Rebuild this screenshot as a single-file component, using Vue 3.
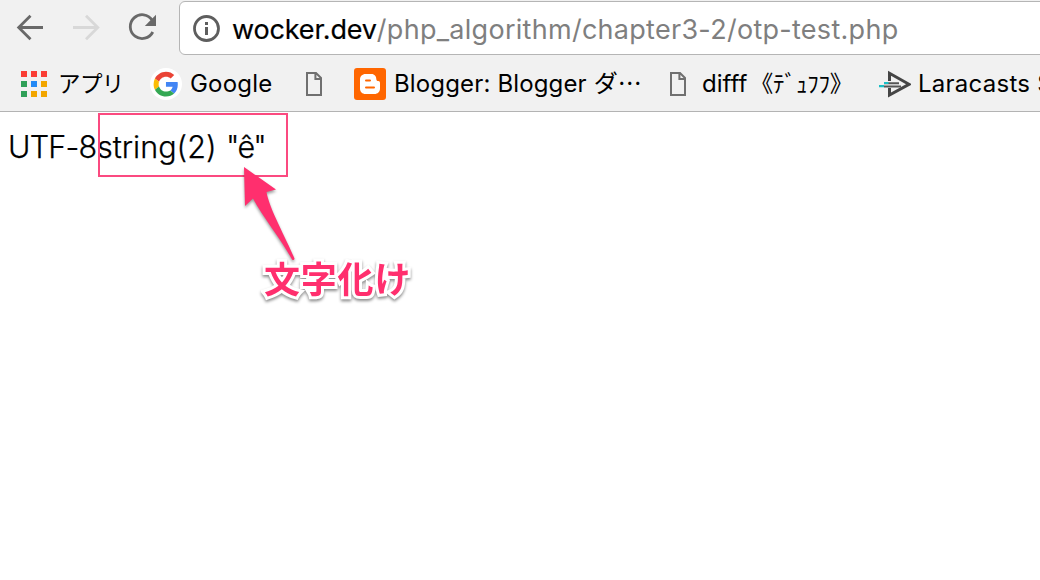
<script setup>
const dots = ['#fa3e35', '#fa3e35', '#fa3e35', '#30a058', '#2489f5', '#f2a600', '#30a058', '#f2a600', '#f2a600']
</script>

<template>
  <div class="window">
    <header class="chrome">
      <div class="toolbar">
        <svg class="nav" width="179" height="56" viewBox="0 0 179 56" fill="none" stroke-width="2.8">
          <path d="M43 27.5H19M30.5 15.7L18.7 27.5L30.5 39.3" stroke="#696969" />
          <path d="M73 27.5H97M86 15.7L97.8 27.5L86 39.3" stroke="#d8d8d8" />
          <path d="M152.2 20.2A11.9 11.9 0 1 0 152.8 32" stroke="#696969" />
          <path d="M156 14.8V26H144.8Z" fill="#696969" />
        </svg>
        <div class="omnibox">
          <svg class="info" width="28" height="28" viewBox="0 0 28 28">
            <circle cx="14.5" cy="14.5" r="12" fill="none" stroke="#5e5e5e" stroke-width="2.8" />
            <path d="M13 8h3v3h-3zM13 13h3v8h-3z" fill="#5e5e5e" />
          </svg>
          <span class="url"><span class="host">wocker.dev</span><span class="path">/php_algorithm/chapter3-2/otp-test.php</span></span>
        </div>
      </div>
      <nav class="bookmarks">
        <div class="item apps">
          <span class="grid"><i v-for="(c, i) in dots" :key="i" :style="{ background: c }"></i></span>
          <span class="label kana">アプリ</span>
        </div>
        <div class="item google">
          <svg width="32" height="32" viewBox="0 0 32 32">
            <circle cx="16" cy="16" r="16" fill="#fff" />
            <g transform="translate(3.6 3.8) scale(.515)">
              <path fill="#EA4335" d="M24 9.5c3.54 0 6.71 1.22 9.21 3.6l6.85-6.85C35.9 2.38 30.47 0 24 0 14.62 0 6.51 5.38 2.56 13.22l7.98 6.19C12.43 13.72 17.74 9.5 24 9.5z" />
              <path fill="#4285F4" d="M46.98 24.55c0-1.57-.15-3.09-.38-4.55H24v9.02h12.94c-.58 2.96-2.26 5.48-4.78 7.18l7.73 6c4.51-4.18 7.09-10.36 7.09-17.65z" />
              <path fill="#FBBC05" d="M10.53 28.59c-.48-1.45-.76-2.99-.76-4.59s.27-3.14.76-4.59l-7.98-6.19C.92 16.46 0 20.12 0 24c0 3.88.92 7.54 2.56 10.78l7.97-6.19z" />
              <path fill="#34A853" d="M24 48c6.48 0 11.93-2.13 15.89-5.81l-7.73-6c-2.15 1.45-4.92 2.3-8.16 2.3-6.26 0-11.57-4.22-13.47-9.91l-7.98 6.19C6.51 42.62 14.62 48 24 48z" />
            </g>
          </svg>
          <span class="label">Google</span>
        </div>
        <div class="item blank">
          <svg width="16" height="24" viewBox="0 0 16 24" fill="none" stroke="#707070" stroke-width="2">
            <path d="M1 1H10L15 6V23H1ZM9.4 1V7H15" />
          </svg>
        </div>
        <div class="item blogger">
          <svg width="32" height="32" viewBox="0 0 32 32">
            <rect width="32" height="32" rx="3" fill="#f60" />
            <path fill="#fff" d="M11.5 6H17.5C20.5 6 22.3 8.4 22.3 11C22.4 12.6 22.9 13 24.3 13C25.5 13 26 13.7 26 15V20.5C26 23.8 23.6 26 20.5 26H11.5C8.3 26 6 23.8 6 20.5V11.5C6 8.3 8.3 6 11.5 6Z" />
            <path d="M12 12.4H16M12 19.6H20" stroke="#f60" stroke-width="2" stroke-linecap="round" />
          </svg>
          <span class="label">Blogger: Blogger ダ⋯</span>
        </div>
        <div class="item difff">
          <svg width="16" height="24" viewBox="0 0 16 24" fill="none" stroke="#707070" stroke-width="2">
            <path d="M1 1H10L15 6V23H1ZM9.4 1V7H15" />
          </svg>
          <span class="label">difff</span><span class="label half">《ﾃﾞｭﾌﾌ》</span>
        </div>
        <div class="item lara">
          <svg width="32" height="28" viewBox="0 0 32 28" fill="none">
            <path d="M10.5 11V3.3L30 14.3L10.5 25V18" stroke="#454545" stroke-width="3" />
            <path d="M5 13.3H20M5 16.4H22" stroke="#555" stroke-width="2" />
            <path d="M5 13H9.5M0 16.2H5" stroke="#18bfc5" stroke-width="2.2" />
          </svg>
          <span class="label">Laracasts S</span>
        </div>
      </nav>
    </header>
    <main class="page">
      <p class="output"><span class="enc">UTF-8</span><span class="type">string(2)</span><span class="value">"ê"</span></p>
      <div class="frame"></div>
      <svg class="arrow" width="80" height="110" viewBox="0 0 80 110">
        <path d="M14 12L46 34.5L36.5 37C39 53 56 83 64.5 103.5Q64 106 62 104.5C51 84 32 61 23 43.5L15 51Z" fill="#ff2f6e" />
      </svg>
      <div class="note">文字化け</div>
    </main>
  </div>
</template>

<style>
html, body { margin: 0; background: #fff; overflow: hidden; }
</style>

<style scoped>
.window { width: 1040px; height: 580px; overflow: hidden; background: #fff; color: #000; font-family: Inter, "Noto Sans CJK JP", sans-serif; }
.chrome { box-sizing: border-box; height: 112px; background: #f1f1f1; border-bottom: 1px solid #b3b3b3; }
.toolbar { display: flex; height: 56px; }
.nav { flex: none; }
.omnibox { flex: none; box-sizing: border-box; display: flex; align-items: center; width: 880px; height: 54px; margin-top: 1px; padding-left: 12px; border: 1px solid #b5b5b5; border-radius: 6px; background: #fff; }
.info { flex: none; margin-right: 12px; }
.url { display: flex; font-size: 27px; line-height: 34px; white-space: pre; padding-top: 3px; }
.host { -webkit-text-stroke: .2px #000; letter-spacing: -.15px; }
.path { color: #7f7f7f; letter-spacing: .28px; }
.bookmarks { display: flex; height: 55px; padding-left: 21px; }
.item { flex: none; display: flex; align-items: center; }
.item svg { flex: none; }
.label { font-size: 24px; line-height: 32px; white-space: pre; }
.kana { font-size: 22.5px; letter-spacing: -.6px; }
.apps { width: 129px; }
.grid { display: grid; grid-template-columns: repeat(3, 6px); gap: 4px; width: 26px; margin-right: 11px; }
.grid i { height: 6px; }
.google { width: 156px; gap: 8px; }
.google .label { letter-spacing: .2px; }
.blank { width: 48px; }
.blogger { width: 316px; gap: 8px; }
.blogger .label { letter-spacing: .15px; }
.difff { width: 209px; }
.difff svg { margin-right: 16px; }
.half { font-size: 23px; letter-spacing: -.2px; margin-left: 3px; }
.lara { gap: 7px; }
.lara .label { letter-spacing: .25px; }
.page { position: relative; height: 468px; }
.output { display: flex; margin: 0; padding: 16px 0 0 8px; font: 300 30.5px/38px Inter, sans-serif; white-space: pre; -webkit-text-stroke: .25px #000; }
.enc { width: 89px; letter-spacing: -.8px; }
.type { width: 129px; }
.value { letter-spacing: -1.6px; }
.frame { position: absolute; left: 98px; top: 1px; width: 186px; height: 60px; border: 2px solid #fb4a80; }
.arrow { position: absolute; left: 230px; top: 43px; filter: drop-shadow(0 2px 1.5px rgba(0, 0, 0, .4)); }
.note { position: absolute; left: 264px; top: 141px; font: bold 36px/48px "Noto Sans CJK JP", sans-serif; letter-spacing: .8px; color: #ff2f6e; -webkit-text-stroke: 6px #fff; paint-order: stroke fill; filter: drop-shadow(0 2px 1.5px rgba(0, 0, 0, .45)); white-space: nowrap; }
</style>
